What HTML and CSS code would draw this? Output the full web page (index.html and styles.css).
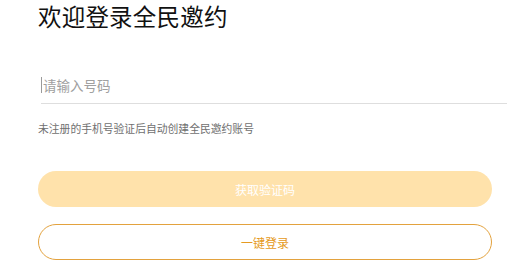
FILE: index.html
```html
<!DOCTYPE html>
<html lang="zh-CN">
<head>
<meta charset="utf-8">
<link rel="stylesheet" href="styles.css">
</head>
<body>
<div class="page">
  <h1 class="title">欢迎登录全民邀约</h1>
  <div class="field">
    <span class="caret"></span>
    <span class="placeholder">请输入号码</span>
  </div>
  <p class="hint">未注册的手机号验证后自动创建全民邀约账号</p>
  <div class="btn btn-code">获取验证码</div>
  <div class="btn btn-quick">一键登录</div>
</div>
</body>
</html>
```

FILE: styles.css
```css
html, body {
  margin: 0;
  padding: 0;
  background: #fff;
}
body {
  font-family: "Noto Sans CJK SC", "Noto Sans", sans-serif;
}
.page {
  padding: 0 36px 0 38px;
  display: flex;
  flex-direction: column;
}
.title {
  margin: 0;
  padding-top: 0;
  font-size: 23.5px;
  line-height: 32px;
  font-weight: 400;
  color: #111;
  letter-spacing: 0.2px;
}
.field {
  margin-top: 38px;
  margin-left: 3px;
  margin-right: -15px;
  height: 34px;
  padding-bottom: 3px;
  box-sizing: border-box;
  border-bottom: 1px solid #dedede;
  display: flex;
  align-items: center;
}
.caret {
  width: 1px;
  height: 16px;
  background: #9a9a9a;
  margin-right: 1px;
}
.placeholder {
  font-size: 13.5px;
  color: #a0a0a0;
}
.hint {
  margin: 16px 0 0 0;
  font-size: 10.8px;
  line-height: 16px;
  color: #707070;
}
.btn {
  height: 36px;
  border-radius: 18px;
  display: flex;
  align-items: center;
  justify-content: center;
  font-size: 12px;
  box-sizing: border-box;
}
.btn-code {
  margin-top: 35px;
  background: #ffe2ab;
  color: #fff;
}
.btn-quick {
  margin-top: 17px;
  border: 1px solid #e3a23e;
  color: #e59a22;
}
```
